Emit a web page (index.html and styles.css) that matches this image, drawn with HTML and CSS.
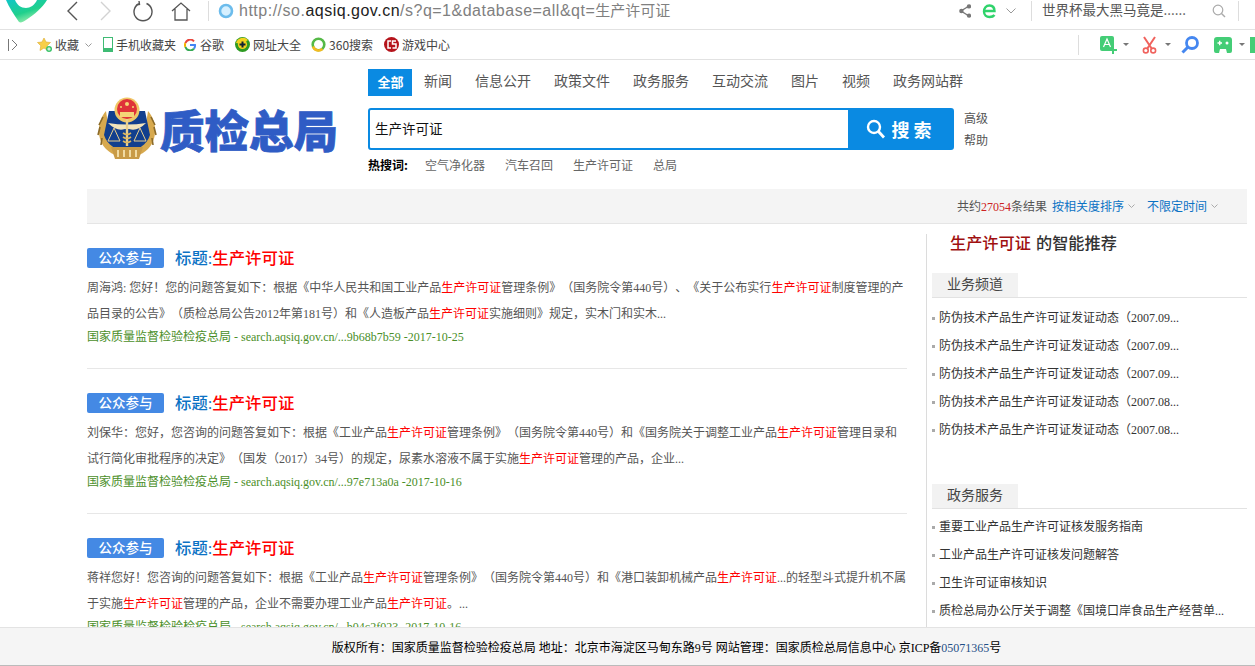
FILE: index.html
```html
<!DOCTYPE html>
<html lang="zh-CN">
<head>
<meta charset="utf-8">
<title>质检总局 搜索</title>
<link rel="stylesheet" href="styles.css">
</head>
<body>
<div class="toolbar">
  <svg class="brand" width="44" height="24" viewBox="0 0 44 24"><defs><linearGradient id="pin" x1="0" y1="0" x2="0.6" y2="1"><stop offset="0" stop-color="#10c6c8"/><stop offset="0.6" stop-color="#1fd08c"/><stop offset="1" stop-color="#a5f0b0"/></linearGradient></defs><path d="M2 0 C5 7 10 15 15 22 C17 23 19 22 22 20 C31 14 38 8 43 0 L33 0 C31 5 26 8 22 8 C17 8 13 5 11 0 Z" fill="url(#pin)"/></svg>
  <svg class="ic back" width="14" height="22" viewBox="0 0 14 22"><path d="M12 2 L3 11 L12 20" fill="none" stroke="#555" stroke-width="1.4"/></svg>
  <svg class="ic forward" width="14" height="22" viewBox="0 0 14 22"><path d="M2 2 L11 11 L2 20" fill="none" stroke="#d2d2d2" stroke-width="1.4"/></svg>
  <svg class="ic refresh" width="20" height="22" viewBox="0 0 20 22"><path d="M6.5 3.5 A9 9 0 1 0 13.5 3.5 M6 1 L6.5 4.5 L3 5" fill="none" stroke="#555" stroke-width="1.4"/></svg>
  <svg class="ic home" width="20" height="20" viewBox="0 0 20 20"><path d="M1 10 L10 2 L19 10 M4 8 V19 H16 V8" fill="none" stroke="#555" stroke-width="1.3"/></svg>
  <span class="vline vline-a"></span>
  <svg class="ic globe" width="16" height="16" viewBox="0 0 16 16"><circle cx="8" cy="8" r="6" fill="#d6f0ff" stroke="#6cbcec" stroke-width="2.6"/></svg>
  <div class="url">http://so.<b>aqsiq.gov.cn</b>/s?q=1&amp;database=all&amp;qt=<span class="url-cjk">生产许可证</span></div>
  <svg class="ic share" width="12" height="14" viewBox="0 0 12 14"><path d="M10 2 L2 7 L10 12" fill="none" stroke="#777" stroke-width="1.4"/><circle cx="10" cy="2.4" r="2.2" fill="#777"/><circle cx="2.4" cy="7" r="2.2" fill="#777"/><circle cx="10" cy="11.6" r="2.2" fill="#777"/></svg>
  <svg class="ic edge" width="15" height="16" viewBox="0 0 15 16"><path d="M2.5 8 H12.5 C12.5 4 10 2.5 7.5 2.5 C4 2.5 2 5 2 8.5 C2 12 4.5 14 7.5 14 C9.5 14 11.5 13.4 12.5 12" fill="none" stroke="#2fd36b" stroke-width="2.4"/></svg>
  <svg class="ic chev" width="10" height="6" viewBox="0 0 10 6"><path d="M0.5 0.5 L5 5 L9.5 0.5" fill="none" stroke="#999"/></svg>
  <span class="vline vline-b"></span>
  <div class="news">世界杯最大黑马竟是......</div>
  <svg class="ic find" width="14" height="14" viewBox="0 0 14 14"><circle cx="6" cy="6" r="4.8" fill="none" stroke="#aaa" stroke-width="1.2"/><path d="M9.5 9.5 L13 13" stroke="#aaa" stroke-width="1.4"/></svg>
  <span class="vline vline-c"></span>
</div>

<div class="bookmarks">
  <svg class="side" width="12" height="12" viewBox="0 0 12 12"><path d="M1.5 0 V12" stroke="#777"/><path d="M5 1 L10 6 L5 11" fill="none" stroke="#777"/></svg>
  <div class="mark star">
    <svg width="15" height="15" viewBox="0 0 15 15"><path d="M7 1 L9 5 L13.5 5.5 L10.2 8.7 L11 13.5 L7 11 L3 13.5 L3.8 8.7 L.5 5.5 L5 5 Z" fill="#f8cf48" stroke="#dca92b" stroke-width=".6"/><circle cx="12" cy="12" r="3" fill="#3cc36a"/><path d="M10.3 12 H13.7 M12 10.3 V13.7" stroke="#fff"/></svg>
    <span>收藏</span>
    <svg class="mini" width="7" height="4" viewBox="0 0 7 4"><path d="M.5 .5 L3.5 3.5 L6.5 .5" fill="none" stroke="#999"/></svg>
  </div>
  <div class="mark phone">
    <svg width="10" height="15" viewBox="0 0 10 15"><rect x=".5" y=".5" width="9" height="14" fill="#fff" stroke="#3fbb74"/><rect x=".5" y="11" width="9" height="3.5" fill="#3fbb74"/></svg>
    <span>手机收藏夹</span>
  </div>
  <div class="mark google">
    <svg width="12" height="12" viewBox="0 0 12 12"><path d="M10 2.4 A5 5 0 0 0 1.4 4" fill="none" stroke="#e8453c" stroke-width="2"/><path d="M1.4 4 A5 5 0 0 0 1.4 8" fill="none" stroke="#f4b400" stroke-width="2"/><path d="M1.4 8 A5 5 0 0 0 10 9.6" fill="none" stroke="#34a853" stroke-width="2"/><path d="M10 9.6 A5 5 0 0 0 11 6 H6" fill="none" stroke="#4285f4" stroke-width="2"/></svg>
    <span>谷歌</span>
  </div>
  <div class="mark sites">
    <svg width="15" height="15" viewBox="0 0 15 15"><circle cx="7.5" cy="7.5" r="7.5" fill="#2d9a22"/><path d="M1 6 A7 7 0 0 1 13 3 L7 7 Z" fill="#f3d21e"/><circle cx="7.5" cy="7.5" r="4.6" fill="#f3d21e"/><path d="M4.5 7.5 H10.5 M7.5 4.5 V10.5" stroke="#123" stroke-width="2"/></svg>
    <span>网址大全</span>
  </div>
  <div class="mark so">
    <svg width="15" height="15" viewBox="0 0 15 15"><circle cx="7.5" cy="7.5" r="5.8" fill="none" stroke="#55b947" stroke-width="2.6"/><path d="M2 9.5 A6 6 0 0 0 11.5 12" fill="none" stroke="#f4bb21" stroke-width="2.6"/></svg>
    <span>360搜索</span>
  </div>
  <div class="mark game">
    <svg width="15" height="15" viewBox="0 0 15 15"><circle cx="7.5" cy="7.5" r="7.5" fill="#b5141c"/><path d="M7 4 H4 V11 H7 M12 4 H8.5 V7 H12 V11 H8.5" fill="none" stroke="#fff" stroke-width="1.5"/></svg>
    <span>游戏中心</span>
  </div>
  <span class="vline vline-d"></span>
  <svg class="tool t-a" width="18" height="18" viewBox="0 0 18 18"><rect width="14" height="15" rx="2" fill="#44cd76"/><path d="M3.5 11 L7 3 L10.5 11 M5 8.5 H9" fill="none" stroke="#fff" stroke-width="1.2"/><path d="M9 14 H17 M13 10 V18" stroke="#44cd76" stroke-width="2"/></svg>
  <i class="caret"></i>
  <svg class="tool t-b" width="15" height="18" viewBox="0 0 15 18"><path d="M2 1 L10 13 M13 1 L5 13" stroke="#f0625d" stroke-width="2"/><circle cx="3.8" cy="14.5" r="2.4" fill="none" stroke="#f0625d" stroke-width="1.6"/><circle cx="11.2" cy="14.5" r="2.4" fill="none" stroke="#f0625d" stroke-width="1.6"/></svg>
  <i class="caret caret-b"></i>
  <svg class="tool t-c" width="18" height="18" viewBox="0 0 18 18"><circle cx="11" cy="7" r="5.5" fill="none" stroke="#4587f0" stroke-width="2.8"/><path d="M7 11 L1.5 16.5" stroke="#4587f0" stroke-width="3"/></svg>
  <svg class="tool t-d" width="18" height="16" viewBox="0 0 18 16"><path d="M3 0 H15 Q18 0 18 3 V14 Q18 16 16 16 H13 L12 12 H6 L5 16 H2 Q0 16 0 14 V3 Q0 0 3 0 Z" fill="#44cd76"/><path d="M3.5 6 H8 M5.7 3.8 V8.2" stroke="#fff" stroke-width="1.4"/><circle cx="13" cy="6" r="1.5" fill="#fff"/></svg>
  <i class="caret caret-c"></i>
  <svg class="tool t-e" width="7" height="16" viewBox="0 0 7 16"><path d="M0 0 H7 V16 H0 Z" fill="#44cd76"/></svg>
</div>

<header class="masthead">
  <div class="logo">
    <svg class="emblem" width="60" height="64" viewBox="0 0 60 64">
      <path d="M9 14 C0 24 -1 42 9 52 C16 59 24 60 30 60 C36 60 44 59 51 52 C61 42 60 24 51 14 L47 40 L30 50 L13 40 Z" fill="#d7a94e"/>
      <path d="M6 20 L2 28 M3 30 L1 38 M5 41 L4 48 M54 20 L58 28 M57 30 L59 38 M55 41 L56 48" stroke="#8a6a2a" stroke-width="1.6"/>
      <path d="M12 14 H48 L53 38 C50 48 40 54 30 54 C20 54 10 48 7 38 Z" fill="#123f8e"/>
      <circle cx="30" cy="13" r="12.5" fill="#f0c766"/>
      <circle cx="30" cy="12" r="10" fill="#df3339"/>
      <path d="M23 15 H37 V20 H23 Z" fill="#f4d477"/>
      <circle cx="30" cy="7" r="2" fill="#f6d875"/><circle cx="24" cy="10" r="1" fill="#f6d875"/><circle cx="36" cy="10" r="1" fill="#f6d875"/>
      <path d="M11 26 Q30 29 49 26 Q40 35 32 32 H28 Q20 35 11 26 Z" fill="#f2e4bb"/>
      <path d="M30 22 V49" stroke="#e9cf8d" stroke-width="2.4"/>
      <path d="M26 36 Q30 39 34 36 M26 40 Q30 43 34 40 M26 44 Q30 47 34 44" fill="none" stroke="#dcb660" stroke-width="1.6"/>
      <path d="M17 31 L11 44 H23 Z M43 31 L37 44 H49 Z" fill="none" stroke="#e9cf8d"/>
      <path d="M14 50 H46 L42 62 H18 Z" fill="#c99b47"/>
      <path d="M21 53 V60 M27 53 V60 M33 53 V60 M39 53 V60" stroke="#f1dba3" stroke-width="2"/>
    </svg>
    <span class="logo-text">质检总局</span>
  </div>
  <div class="searcher">
    <nav class="channels">
      <a class="channel active">全部</a><a class="channel">新闻</a><a class="channel">信息公开</a><a class="channel">政策文件</a><a class="channel">政务服务</a><a class="channel">互动交流</a><a class="channel">图片</a><a class="channel">视频</a><a class="channel">政务网站群</a>
    </nav>
    <div class="search-row">
      <div class="searchbox">
        <div class="query">生产许可证</div>
        <div class="go">
          <svg width="20" height="20" viewBox="0 0 20 20"><circle cx="8" cy="8" r="6" fill="none" stroke="#fff" stroke-width="2.4"/><path d="M12.5 12.5 L18 18.5" stroke="#fff" stroke-width="2.8"/></svg>
          <span>搜 索</span>
        </div>
      </div>
      <div class="aux"><a>高级</a><a>帮助</a></div>
    </div>
    <div class="hot"><b>热搜词:</b><a>空气净化器</a><a>汽车召回</a><a>生产许可证</a><a>总局</a></div>
  </div>
</header>

<div class="filter">
  <span>共约<em>27054</em>条结果</span>
  <a class="sort">按相关度排序<svg width="7" height="4" viewBox="0 0 7 4"><path d="M.5 .5 L3.5 3.5 L6.5 .5" fill="none" stroke="#aaa"/></svg></a>
  <a class="sort">不限定时间<svg width="7" height="4" viewBox="0 0 7 4"><path d="M.5 .5 L3.5 3.5 L6.5 .5" fill="none" stroke="#aaa"/></svg></a>
</div>

<main class="content">
  <section class="results">
    <article class="result">
      <h3 class="title"><span class="badge">公众参与</span><a>标题:<strong>生产许可证</strong></a></h3>
      <p class="desc">周海鸿: 您好！您的问题答复如下：根据《中华人民共和国工业产品<mark>生产许可证</mark>管理条例》（国务院令第440号）、《关于公布实行<mark>生产许可证</mark>制度管理的产品目录的公告》（质检总局公告2012年第181号）和《人造板产品<mark>生产许可证</mark>实施细则》规定，实木门和实木...</p>
      <p class="source">国家质量监督检验检疫总局 - search.aqsiq.gov.cn/...9b68b7b59 -2017-10-25</p>
    </article>
    <article class="result">
      <h3 class="title"><span class="badge">公众参与</span><a>标题:<strong>生产许可证</strong></a></h3>
      <p class="desc">刘保华：您好，您咨询的问题答复如下：根据《工业产品<mark>生产许可证</mark>管理条例》（国务院令第440号）和《国务院关于调整工业产品<mark>生产许可证</mark>管理目录和试行简化审批程序的决定》（国发（2017）34号）的规定，尿素水溶液不属于实施<mark>生产许可证</mark>管理的产品，企业...</p>
      <p class="source">国家质量监督检验检疫总局 - search.aqsiq.gov.cn/...97e713a0a -2017-10-16</p>
    </article>
    <article class="result">
      <h3 class="title"><span class="badge">公众参与</span><a>标题:<strong>生产许可证</strong></a></h3>
      <p class="desc">蒋祥您好！您咨询的问题答复如下：根据《工业产品<mark>生产许可证</mark>管理条例》（国务院令第440号）和《港口装卸机械产品<mark>生产许可证</mark>...的轻型斗式提升机不属于实施<mark>生产许可证</mark>管理的产品，企业不需要办理工业产品<mark>生产许可证</mark>。...</p>
      <p class="source">国家质量监督检验检疫总局 - search.aqsiq.gov.cn/...b04c2f023 -2017-10-16</p>
    </article>
  </section>
  <aside class="sidebar">
    <h2 class="rec"><span>生产许可证</span> 的智能推荐</h2>
    <div class="panel">
      <div class="panel-head"><span>业务频道</span></div>
      <ul class="links">
        <li>防伪技术产品生产许可证发证动态（2007.09...</li>
        <li>防伪技术产品生产许可证发证动态（2007.09...</li>
        <li>防伪技术产品生产许可证发证动态（2007.09...</li>
        <li>防伪技术产品生产许可证发证动态（2007.08...</li>
        <li>防伪技术产品生产许可证发证动态（2007.08...</li>
      </ul>
    </div>
    <div class="panel panel-b">
      <div class="panel-head"><span>政务服务</span></div>
      <ul class="links">
        <li>重要工业产品生产许可证核发服务指南</li>
        <li>工业产品生产许可证核发问题解答</li>
        <li>卫生许可证审核知识</li>
        <li>质检总局办公厅关于调整《国境口岸食品生产经营单...</li>
      </ul>
    </div>
  </aside>
</main>

<footer class="footer">版权所有：国家质量监督检验检疫总局 地址：北京市海淀区马甸东路9号 网站管理：国家质检总局信息中心 京ICP备<span>05071365</span>号</footer>
</body>
</html>
```

FILE: styles.css
```css
* { box-sizing: border-box; }
html, body { margin: 0; padding: 0; }
body {
  position: relative;
  width: 1255px;
  height: 666px;
  overflow: hidden;
  background: #fff;
  font-family: "Liberation Serif", "Noto Sans CJK SC", serif;
  font-size: 12px;
  color: #555;
  text-spacing-trim: space-all;
  font-feature-settings: "chws" 0, "halt" 0, "palt" 0;
}
a { color: inherit; text-decoration: none; }
h2, h3, p, ul { margin: 0; padding: 0; }
svg { display: block; flex: none; }

/* browser chrome */
.toolbar, .bookmarks {
  display: flex;
  align-items: center;
  overflow: hidden;
  border-bottom: 1px solid #e2e2e2;
  font-family: "Noto Sans CJK SC", "Liberation Sans", sans-serif;
}
.toolbar { height: 30px; }
.bookmarks { height: 30px; color: #444; }
.brand { align-self: flex-start; margin-left: 4px; }
.back { margin-left: 17px; margin-top: -8px; }
.forward { margin-left: 20px; margin-top: -8px; }
.refresh { margin-left: 20px; margin-top: -8px; }
.home { margin-left: 18px; margin-top: -8px; }
.ic { flex: none; }
.vline { display: block; flex: none; width: 1px; height: 20px; background: #ddd; }
.vline-a { margin: -8px 0 0 17px; }
.globe { margin: -8px 0 0 9px; }
.url {
  width: 720px;
  margin: -11px 0 0 5px;
  font-family: "Liberation Sans", "Noto Sans CJK SC", sans-serif;
  font-size: 16px;
  letter-spacing: 0.5px;
  color: #808080;
  white-space: nowrap;
}
.url b { font-weight: 400; color: #222; }
.url-cjk { font-size: 15px; letter-spacing: 0; }
.share { margin: -8px 0 0 0; }
.edge { margin: -8px 0 0 11px; }
.chev { margin: -8px 0 0 9px; }
.vline-b { margin: -8px 0 0 15px; }
.news { width: 170px; margin: -11px 0 0 10px; font-size: 13.5px; color: #555; white-space: nowrap; }
.find { margin: -8px 0 0 0; }
.vline-c { margin: -8px 0 0 12px; }

.side { margin-left: 7px; }
.mark { display: flex; align-items: center; font-size: 12px; white-space: nowrap; color: #444; }
.star { margin-left: 18px; gap: 3px; }
.star .mini { margin-left: 3px; }
.phone { margin-left: 11px; gap: 3px; }
.google { margin-left: 8px; gap: 4px; }
.sites { margin-left: 11px; gap: 3px; }
.so { margin-left: 10px; gap: 3px; }
.game { margin-left: 11px; gap: 3px; }
.vline-d { margin-left: 628px; }
.tool { flex: none; }
.caret { display: block; flex: none; width: 0; height: 0; border: 3px solid transparent; border-top: 3px solid #777; border-bottom: 0; margin-left: 5px; }
.t-a { margin-left: 21px; }
.t-b { margin-left: 13px; }
.caret-b { margin-left: 8px; }
.t-c { margin-left: 10px; }
.t-d { margin-left: 15px; }
.caret-c { margin-left: 7px; }
.t-e { margin-left: 5px; }

/* masthead */
.masthead {
  display: flex;
  height: 129px;
  padding-left: 97px;
}
.logo { display: flex; align-items: center; width: 271px; height: 64px; margin-top: 37px; }
.logo-text {
  margin-left: 3px;
  font-family: "Noto Sans CJK SC", sans-serif;
  font-size: 44.5px;
  font-weight: 900;
  line-height: 1;
  color: #2f5cc5;
  white-space: nowrap;
  -webkit-text-stroke: 0.8px #2f5cc5;
}
.searcher { padding-top: 9px; font-family: "Noto Sans CJK SC", sans-serif; }
.channels { display: flex; align-items: flex-start; height: 27px; gap: 23px; font-size: 14px; color: #555; }
.channel { line-height: 23px; white-space: nowrap; }
.channel.active { width: 44px; height: 27px; margin-right: -11px; padding: 0 9.5px; background: #0a8ae2; color: #fff; font-weight: 700; font-size: 13px; line-height: 26px; }
.search-row { display: flex; margin-top: 12px; }
.searchbox {
  display: flex;
  width: 586px;
  height: 42px;
  border: 2px solid #0a8ae2;
  border-radius: 3px;
}
.query { flex: 1; padding-left: 5px; line-height: 36px; font-size: 13.5px; color: #111; }
.go {
  display: flex;
  align-items: center;
  justify-content: center;
  gap: 5px;
  width: 104px;
  padding-right: 2px;
  background: #0a8ae2;
  color: #fff;
  font-size: 18px;
  font-weight: 700;
}
.aux { display: flex; flex-direction: column; margin: -1px 0 0 10px; font-size: 12px; line-height: 22px; color: #555; }
.hot { display: flex; align-items: center; gap: 20px; margin-top: 6px; line-height: 16px; font-size: 12px; color: #666; white-space: nowrap; }
.hot b { margin-right: -5px; color: #000; width: 42px; }

/* filter bar */
.filter {
  display: flex;
  justify-content: flex-end;
  align-items: center;
  gap: 5px;
  width: 1160px;
  height: 35px;
  margin-left: 87px;
  padding-right: 29px;
  background: #f4f4f4;
  border-bottom: 1px solid #e5e5e5;
  color: #555;
}
.filter em { font-style: normal; color: #c22; }
.sort { display: inline-flex; align-items: center; gap: 4px; color: #0b72c4; }
.sort + .sort { margin-left: 7px; }

/* content */
.content { display: flex; margin-left: 87px; }
.results { width: 820px; padding-top: 24px; }
.result { position: relative; height: 145px; }
.result::after { content: ""; display: block; position: absolute; left: 0; right: 0; top: 120px; height: 1px; background: #e7e7e7; }
.title { display: flex; align-items: center; height: 20px; font-weight: 400; }
.badge {
  display: block;
  width: 77px;
  height: 20px;
  border-radius: 2px;
  background: #4489e4;
  color: #fff;
  text-align: center;
  font-size: 13.5px;
  font-weight: 500;
  line-height: 19px;
  font-family: "Noto Sans CJK SC", sans-serif;
}
.title a { margin-left: 11px; padding-top: 2px; font-size: 16.4px; font-weight: 500; line-height: 20px; color: #0b72c4; white-space: nowrap; }
.title strong { font-weight: 500; color: #f00; }
.desc { margin-top: 7px; font-size: 12px; line-height: 26px; color: #555; }
mark { background: none; color: #f00; }
.source { margin-top: 0; line-height: 20px; font-size: 12px; color: #4b8f29; white-space: nowrap; }

.sidebar {
  width: 321px;
  height: 420px;
  margin: 10px 0 0 19px;
  padding-left: 5px;
  border-left: 1px solid #dcdcdc;
}
.rec { padding-left: 18px; font-size: 16.2px; font-weight: 500; line-height: 20px; word-spacing: 1px; color: #333; white-space: nowrap; }
.rec span { color: #a01010; }
.panel { margin-top: 19px; }
.panel-b { margin-top: 40px; }
.panel-head { height: 25px; border-bottom: 1px solid #e2e2e2; }
.panel-head span { display: block; width: 86px; height: 24px; background: #f2f2f2; text-align: center; font-size: 14px; line-height: 24px; color: #444; }
.links { list-style: none; padding-top: 6px; }
.panel-b .links { padding-top: 4px; }
.links li { position: relative; padding-left: 7px; height: 28px; line-height: 28px; font-size: 12px; color: #333; white-space: nowrap; }
.links li::before { content: ""; position: absolute; left: 0; top: 13px; width: 3px; height: 3px; background: #aaa; }

.footer {
  position: absolute;
  left: 0;
  right: 0;
  bottom: 0;
  height: 39px;
  padding: 2px 0 0 78px;
  background: #f5f5f5;
  border-top: 1px solid #e3e3e3;
  border-bottom: 1px solid #bbb;
  text-align: center;
  line-height: 36px;
  font-size: 12px;
  color: #000;
}
.footer span { color: #1f4f86; }
```
